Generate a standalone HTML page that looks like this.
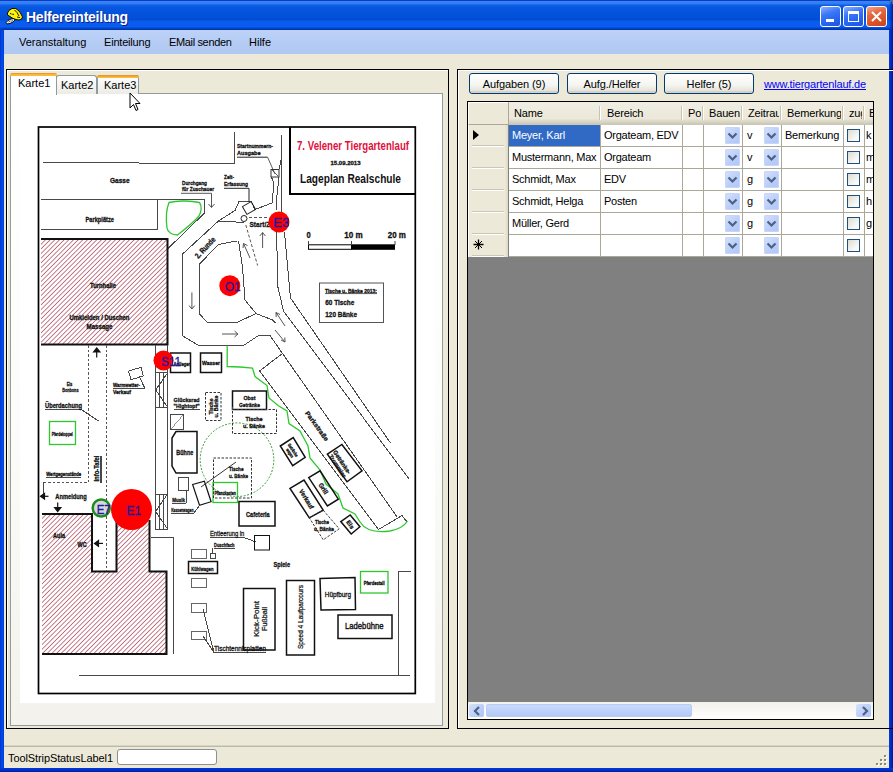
<!DOCTYPE html>
<html><head><meta charset="utf-8">
<style>
*{margin:0;padding:0;box-sizing:border-box}
html,body{width:893px;height:772px;overflow:hidden;background:#fff;font-family:"Liberation Sans",sans-serif;font-size:11px;color:#000}
.a{position:absolute;white-space:nowrap}
#win{position:absolute;left:0;top:0;width:893px;height:772px;background:#0841D6;overflow:hidden}
.tb{top:6px;width:21px;height:21px;border:1px solid #fff;border-radius:3px}
.mi{top:36px;font-size:11px;line-height:12px;color:#000}
.frame{border:1px solid #000}
.ht{top:107px;line-height:12px;overflow:hidden;letter-spacing:-0.15px}
.ct{line-height:12px;letter-spacing:-0.25px}
.cb{width:15px;height:17px;border-radius:2px;background:linear-gradient(135deg,#D6E2FC,#B9CDF8 60%,#AFC6F6);box-shadow:inset 0 0 0 1px #C6D6FA}
.chk{width:13px;height:13px;border:1px solid #1C5180;background:linear-gradient(135deg,#DCDBD5,#F4F4F0 60%,#FFF)}
.btn{top:73px;height:21px;width:90px;border:1px solid #003C74;border-radius:3px;background:linear-gradient(#FFFFFF,#F4F4F0 60%,#E3E2DA 90%,#D6D0C5);text-align:center;line-height:20px;letter-spacing:-0.1px}
.btn::after{content:"";position:absolute;left:1px;right:1px;bottom:0;height:2px;background:#D6D0C5;border-radius:0 0 2px 2px}
</style></head><body>
<div id="win">
<div class="a" style="left:0;top:0;width:893px;height:30px;background:linear-gradient(#0A3CC8 0px,#0A3CC8 1px,#3A86F4 1px,#2F7BF2 4px,#0F5EE8 5px,#0556E0 8px,#0450D8 17px,#044CD2 20px,#0A5CEE 21px,#0A5CEE 27px,#0046D0 28px,#0030A8 30px)"></div>
<div class="a" style="left:0;top:30px;width:4px;height:742px;background:linear-gradient(90deg,#0030C8,#0050F0 2px,#0038D8)"></div>
<div class="a" style="left:889px;top:30px;width:4px;height:742px;background:linear-gradient(90deg,#0040E0,#0028C0 2px,#001A9A)"></div>
<div class="a" style="left:889px;top:0;width:4px;height:30px;background:linear-gradient(90deg,rgba(0,56,208,0),rgba(0,40,180,.6) 2px,rgba(0,24,140,.9))"></div>
<div class="a" style="left:0;top:768px;width:893px;height:4px;background:linear-gradient(#0038D8,#0030C8 2px,#001AA0)"></div>
<div class="a" style="left:890px;top:0;width:3px;height:2px;background:#3A6EA5"></div>
<div class="a" style="left:892px;top:2px;width:1px;height:2px;background:#3A6EA5"></div>
<div class="a" style="left:26px;top:9px;font-weight:bold;font-size:14px;line-height:16px;letter-spacing:-0.25px;color:#fff;text-shadow:1px 1px 0 #0A2288">Helfereinteilung</div>
<!-- icon -->
<svg class="a" style="left:5px;top:6px" width="20" height="20" viewBox="0 0 20 20">
<path d="M2.5 7 L4 4.5 L7 2.5 L10.5 2.5 L13 4 L15 6.5 L16.5 9 L17.5 11 L16.5 13 L14 14 L11 13.5 L8 12.5 L5 10.5 L2.5 9 Z" fill="#FFF200" stroke="#000" stroke-width="0.9"/>
<path d="M5 7.5 L9 8.5 M9.5 4 L12 6.5 L14 10 M12 11 L15 11.5" stroke="#000" stroke-width="0.9" fill="none"/>
<path d="M6 8 L8.5 7.5" stroke="#C8C8C8" stroke-width="1"/>
<path d="M1 16.5 L3 14.5 L6 13 L9 12.5 L10 14 L8 16 L5 17.5 L2 18 Z" fill="#E8E8E8" stroke="#000" stroke-width="0.9"/>
<path d="M3.5 16 L5.5 15 M6 15.5 L8 14" stroke="#555" stroke-width="0.8"/>
</svg>
<!-- title buttons -->
<div class="a tb" style="left:820px;background:linear-gradient(160deg,#8DB0FF 0%,#3C78F8 35%,#2563F2 70%,#1F54D8)"><div class="a" style="left:5px;top:12px;width:8px;height:3px;background:#fff"></div></div>
<div class="a tb" style="left:843px;background:linear-gradient(160deg,#8DB0FF 0%,#3C78F8 35%,#2563F2 70%,#1F54D8)"><div class="a" style="left:4px;top:4px;width:11px;height:11px;border:1px solid #fff;border-top:3px solid #fff"></div></div>
<div class="a tb" style="left:866px;background:linear-gradient(160deg,#F4A58C 0%,#E4683F 35%,#DA5228 70%,#C6421E)"><svg class="a" style="left:3px;top:3px" width="13" height="13"><path d="M2 2 L11 11 M11 2 L2 11" stroke="#fff" stroke-width="2"/></svg></div>
<!-- client -->
<div class="a" style="left:4px;top:30px;width:885px;height:738px;background:#ECE9D8"></div>
<div class="a" style="left:4px;top:30px;width:885px;height:24px;background:linear-gradient(#BCD2F7,#B5CCF4 50%,#B0C8F2)"></div>
<div class="a mi" style="left:19px">Veranstaltung</div>
<div class="a mi" style="left:104px;letter-spacing:-0.2px">Einteilung</div>
<div class="a mi" style="left:169px;letter-spacing:-0.35px">EMail senden</div>
<div class="a mi" style="left:249px">Hilfe</div>
<!-- left panel -->
<div class="a frame" style="left:6px;top:69px;width:443px;height:660px;box-shadow:inset 1px 1px 0 #fff"></div>
<div class="a" style="left:10px;top:93px;width:433px;height:633px;border:1px solid #919B9C;background:linear-gradient(#FFFFFF 0%,#FBFBF9 55%,#F3F2EC)"></div>
<!-- tabs -->
<div class="a" style="left:56px;top:75px;width:41px;height:19px;border:1px solid #919B9C;border-bottom:none;border-radius:3px 3px 0 0;background:linear-gradient(#FFFFFF,#F3F3EF 60%,#ECEBE5)"></div>
<div class="a" style="left:61px;top:79px;line-height:12px">Karte2</div>
<div class="a" style="left:97px;top:75px;width:42px;height:19px;border:1px solid #919B9C;border-bottom:none;border-radius:3px 3px 0 0;background:linear-gradient(#FFFFFF,#F3F3EF 60%,#ECEBE5)"></div>
<div class="a" style="left:97px;top:75px;width:42px;height:3px;background:linear-gradient(#E68B2C,#FFC73C);border-radius:3px 3px 0 0"></div>
<div class="a" style="left:104px;top:79px;line-height:12px">Karte3</div>
<div class="a" style="left:10px;top:73px;width:47px;height:22px;border:1px solid #919B9C;border-bottom:none;border-radius:3px 3px 0 0;background:#FFFFFF"></div>
<div class="a" style="left:10px;top:73px;width:47px;height:3px;background:linear-gradient(#E68B2C,#FFC73C 2px,#F8B030);border-radius:3px 3px 0 0"></div>
<div class="a" style="left:18px;top:77px;line-height:12px">Karte1</div>
<!-- right panel -->
<div class="a frame" style="left:457px;top:69px;width:440px;height:660px;box-shadow:inset 1px 1px 0 #fff"></div>
<div class="a btn" style="left:469px">Aufgaben (9)</div>
<div class="a btn" style="left:567px">Aufg./Helfer</div>
<div class="a btn" style="left:664px">Helfer (5)</div>
<div class="a" style="left:764px;top:78px;line-height:12px;color:#0000FF;text-decoration:underline;letter-spacing:-0.18px">www.tiergartenlauf.de</div>
<!-- grid -->
<div class="a" style="left:467px;top:101px;width:407px;height:619px;background:#808080;border:1px solid #000"></div>
<div class="a" style="left:468px;top:702px;width:405px;height:17px;background:linear-gradient(#F3F1EC,#FEFEFB)"></div>
<div class="a" style="left:469px;top:704px;width:15px;height:13px;border-radius:2px;background:linear-gradient(135deg,#D6E2FC,#B9CDF8 60%,#AFC6F6)"><svg class="a" style="left:3px;top:1px" width="10" height="12"><path d="M7 2 L3 6 L7 10" stroke="#4D6185" stroke-width="2.2" fill="none"/></svg></div>
<div class="a" style="left:486px;top:704px;width:206px;height:13px;border-radius:2px;border:1px solid #B8CCF4;background:linear-gradient(#C9DAFC,#BCD0FA 60%,#B2C8F6)"></div>
<div class="a" style="left:856px;top:704px;width:15px;height:13px;border-radius:2px;background:linear-gradient(135deg,#D6E2FC,#B9CDF8 60%,#AFC6F6)"><svg class="a" style="left:4px;top:1px" width="10" height="12"><path d="M3 2 L7 6 L3 10" stroke="#4D6185" stroke-width="2.2" fill="none"/></svg></div>
<!-- status -->
<div class="a" style="left:4px;top:745px;width:885px;height:1px;background:#D8D4C4"></div>
<div class="a" style="left:4px;top:746px;width:885px;height:1px;background:#BDB9AA"></div>
<div class="a" style="left:8px;top:752px;line-height:12px;letter-spacing:-0.1px">ToolStripStatusLabel1</div>
<div class="a" style="left:117px;top:749px;width:100px;height:16px;border:1px solid #8E8F8F;border-radius:3px;background:#fff"></div>
<svg class="a" style="left:876px;top:755px" width="12" height="12"><g fill="#fff"><rect x="9" y="1" width="2" height="2"/><rect x="5" y="5" width="2" height="2"/><rect x="9" y="5" width="2" height="2"/><rect x="1" y="9" width="2" height="2"/><rect x="5" y="9" width="2" height="2"/><rect x="9" y="9" width="2" height="2"/></g><g fill="#8A8878"><rect x="8" y="0" width="2" height="2"/><rect x="4" y="4" width="2" height="2"/><rect x="8" y="4" width="2" height="2"/><rect x="0" y="8" width="2" height="2"/><rect x="4" y="8" width="2" height="2"/><rect x="8" y="8" width="2" height="2"/></g></svg>
<div class="a" style="left:468px;top:102px;width:405px;height:23px;background:linear-gradient(#F0EEE3 0,#EBE8D9 17px,#E2DECD 18px,#D9D5C4 20px,#CBC7B8 22px)"></div>
<div class="a" style="left:468px;top:102px;width:40px;height:23px;background:#ECE9D8;border-top:1px solid #fff;border-left:1px solid #fff;border-bottom:1px solid #ACA899"></div>
<div class="a ht" style="left:514px;width:84px">Name</div>
<div class="a ht" style="left:607px;width:73px">Bereich</div>
<div class="a ht" style="left:688px;width:13px">Po</div>
<div class="a ht" style="left:709px;width:31px">Bauen</div>
<div class="a ht" style="left:748px;width:31px">Zeitraum</div>
<div class="a ht" style="left:787px;width:54px">Bemerkung</div>
<div class="a ht" style="left:849px;width:13px">zugeteilt</div>
<div class="a ht" style="left:869px;width:4px">Bemerkung2</div>
<div class="a" style="left:599px;top:106px;width:1px;height:14px;background:#C7C5B2"></div><div class="a" style="left:600px;top:106px;width:1px;height:14px;background:#fff"></div>
<div class="a" style="left:681px;top:106px;width:1px;height:14px;background:#C7C5B2"></div><div class="a" style="left:682px;top:106px;width:1px;height:14px;background:#fff"></div>
<div class="a" style="left:702px;top:106px;width:1px;height:14px;background:#C7C5B2"></div><div class="a" style="left:703px;top:106px;width:1px;height:14px;background:#fff"></div>
<div class="a" style="left:741px;top:106px;width:1px;height:14px;background:#C7C5B2"></div><div class="a" style="left:742px;top:106px;width:1px;height:14px;background:#fff"></div>
<div class="a" style="left:780px;top:106px;width:1px;height:14px;background:#C7C5B2"></div><div class="a" style="left:781px;top:106px;width:1px;height:14px;background:#fff"></div>
<div class="a" style="left:842px;top:106px;width:1px;height:14px;background:#C7C5B2"></div><div class="a" style="left:843px;top:106px;width:1px;height:14px;background:#fff"></div>
<div class="a" style="left:863px;top:106px;width:1px;height:14px;background:#C7C5B2"></div><div class="a" style="left:864px;top:106px;width:1px;height:14px;background:#fff"></div>
<div class="a" style="left:509px;top:125px;width:364px;height:132px;background:#fff"></div>
<div class="a" style="left:468px;top:125px;width:40px;height:132px;background:#ECE9D8;border-right:1px solid #ACA899"></div>
<div class="a" style="left:509px;top:146px;width:364px;height:1px;background:#ACA899"></div>
<div class="a" style="left:472px;top:145px;width:32px;height:1px;background:#CBC7B8"></div><div class="a" style="left:472px;top:146px;width:32px;height:1px;background:#fff"></div>
<div class="a" style="left:509px;top:125px;width:91px;height:21px;background:#316AC5"></div>
<div class="a ct" style="left:512px;top:129px;color:#fff">Meyer, Karl</div>
<div class="a ct" style="left:604px;top:129px">Orgateam, EDV</div>
<div class="a ct" style="left:747px;top:129px">v</div>
<div class="a ct" style="left:785px;top:129px">Bemerkung</div>
<div class="a ct" style="left:866px;top:129px;width:7px;overflow:hidden">k</div>
<div class="a cb" style="left:725px;top:127px"><svg width="15" height="17" style="position:absolute;left:0;top:0"><path d="M3.5 6.5 L7.5 10.5 L11.5 6.5" stroke="#4D6185" stroke-width="2.2" fill="none"/></svg></div>
<div class="a cb" style="left:764px;top:127px"><svg width="15" height="17" style="position:absolute;left:0;top:0"><path d="M3.5 6.5 L7.5 10.5 L11.5 6.5" stroke="#4D6185" stroke-width="2.2" fill="none"/></svg></div>
<div class="a chk" style="left:847px;top:129px"></div>
<div class="a" style="left:509px;top:168px;width:364px;height:1px;background:#ACA899"></div>
<div class="a" style="left:472px;top:167px;width:32px;height:1px;background:#CBC7B8"></div><div class="a" style="left:472px;top:168px;width:32px;height:1px;background:#fff"></div>
<div class="a ct" style="left:512px;top:151px">Mustermann, Max</div>
<div class="a ct" style="left:604px;top:151px">Orgateam</div>
<div class="a ct" style="left:747px;top:151px">v</div>
<div class="a ct" style="left:785px;top:151px"></div>
<div class="a ct" style="left:866px;top:151px;width:7px;overflow:hidden">m</div>
<div class="a cb" style="left:725px;top:149px"><svg width="15" height="17" style="position:absolute;left:0;top:0"><path d="M3.5 6.5 L7.5 10.5 L11.5 6.5" stroke="#4D6185" stroke-width="2.2" fill="none"/></svg></div>
<div class="a cb" style="left:764px;top:149px"><svg width="15" height="17" style="position:absolute;left:0;top:0"><path d="M3.5 6.5 L7.5 10.5 L11.5 6.5" stroke="#4D6185" stroke-width="2.2" fill="none"/></svg></div>
<div class="a chk" style="left:847px;top:151px"></div>
<div class="a" style="left:509px;top:190px;width:364px;height:1px;background:#ACA899"></div>
<div class="a" style="left:472px;top:189px;width:32px;height:1px;background:#CBC7B8"></div><div class="a" style="left:472px;top:190px;width:32px;height:1px;background:#fff"></div>
<div class="a ct" style="left:512px;top:173px">Schmidt, Max</div>
<div class="a ct" style="left:604px;top:173px">EDV</div>
<div class="a ct" style="left:747px;top:173px">g</div>
<div class="a ct" style="left:785px;top:173px"></div>
<div class="a ct" style="left:866px;top:173px;width:7px;overflow:hidden">m</div>
<div class="a cb" style="left:725px;top:171px"><svg width="15" height="17" style="position:absolute;left:0;top:0"><path d="M3.5 6.5 L7.5 10.5 L11.5 6.5" stroke="#4D6185" stroke-width="2.2" fill="none"/></svg></div>
<div class="a cb" style="left:764px;top:171px"><svg width="15" height="17" style="position:absolute;left:0;top:0"><path d="M3.5 6.5 L7.5 10.5 L11.5 6.5" stroke="#4D6185" stroke-width="2.2" fill="none"/></svg></div>
<div class="a chk" style="left:847px;top:173px"></div>
<div class="a" style="left:509px;top:212px;width:364px;height:1px;background:#ACA899"></div>
<div class="a" style="left:472px;top:211px;width:32px;height:1px;background:#CBC7B8"></div><div class="a" style="left:472px;top:212px;width:32px;height:1px;background:#fff"></div>
<div class="a ct" style="left:512px;top:195px">Schmidt, Helga</div>
<div class="a ct" style="left:604px;top:195px">Posten</div>
<div class="a ct" style="left:747px;top:195px">g</div>
<div class="a ct" style="left:785px;top:195px"></div>
<div class="a ct" style="left:866px;top:195px;width:7px;overflow:hidden">h</div>
<div class="a cb" style="left:725px;top:193px"><svg width="15" height="17" style="position:absolute;left:0;top:0"><path d="M3.5 6.5 L7.5 10.5 L11.5 6.5" stroke="#4D6185" stroke-width="2.2" fill="none"/></svg></div>
<div class="a cb" style="left:764px;top:193px"><svg width="15" height="17" style="position:absolute;left:0;top:0"><path d="M3.5 6.5 L7.5 10.5 L11.5 6.5" stroke="#4D6185" stroke-width="2.2" fill="none"/></svg></div>
<div class="a chk" style="left:847px;top:195px"></div>
<div class="a" style="left:509px;top:234px;width:364px;height:1px;background:#ACA899"></div>
<div class="a" style="left:472px;top:233px;width:32px;height:1px;background:#CBC7B8"></div><div class="a" style="left:472px;top:234px;width:32px;height:1px;background:#fff"></div>
<div class="a ct" style="left:512px;top:217px">Müller, Gerd</div>
<div class="a ct" style="left:604px;top:217px"></div>
<div class="a ct" style="left:747px;top:217px">g</div>
<div class="a ct" style="left:785px;top:217px"></div>
<div class="a ct" style="left:866px;top:217px;width:7px;overflow:hidden">g</div>
<div class="a cb" style="left:725px;top:215px"><svg width="15" height="17" style="position:absolute;left:0;top:0"><path d="M3.5 6.5 L7.5 10.5 L11.5 6.5" stroke="#4D6185" stroke-width="2.2" fill="none"/></svg></div>
<div class="a cb" style="left:764px;top:215px"><svg width="15" height="17" style="position:absolute;left:0;top:0"><path d="M3.5 6.5 L7.5 10.5 L11.5 6.5" stroke="#4D6185" stroke-width="2.2" fill="none"/></svg></div>
<div class="a chk" style="left:847px;top:217px"></div>
<div class="a" style="left:509px;top:256px;width:364px;height:1px;background:#ACA899"></div>
<div class="a" style="left:472px;top:255px;width:32px;height:1px;background:#CBC7B8"></div><div class="a" style="left:472px;top:256px;width:32px;height:1px;background:#fff"></div>
<div class="a ct" style="left:512px;top:239px"></div>
<div class="a ct" style="left:604px;top:239px"></div>
<div class="a ct" style="left:747px;top:239px"></div>
<div class="a ct" style="left:785px;top:239px"></div>
<div class="a ct" style="left:866px;top:239px;width:7px;overflow:hidden"></div>
<div class="a cb" style="left:725px;top:237px"><svg width="15" height="17" style="position:absolute;left:0;top:0"><path d="M3.5 6.5 L7.5 10.5 L11.5 6.5" stroke="#4D6185" stroke-width="2.2" fill="none"/></svg></div>
<div class="a cb" style="left:764px;top:237px"><svg width="15" height="17" style="position:absolute;left:0;top:0"><path d="M3.5 6.5 L7.5 10.5 L11.5 6.5" stroke="#4D6185" stroke-width="2.2" fill="none"/></svg></div>
<div class="a chk" style="left:847px;top:239px"></div>
<div class="a" style="left:600px;top:125px;width:1px;height:132px;background:#ACA899"></div>
<div class="a" style="left:682px;top:125px;width:1px;height:132px;background:#ACA899"></div>
<div class="a" style="left:703px;top:125px;width:1px;height:132px;background:#ACA899"></div>
<div class="a" style="left:742px;top:125px;width:1px;height:132px;background:#ACA899"></div>
<div class="a" style="left:781px;top:125px;width:1px;height:132px;background:#ACA899"></div>
<div class="a" style="left:843px;top:125px;width:1px;height:132px;background:#ACA899"></div>
<div class="a" style="left:864px;top:125px;width:1px;height:132px;background:#ACA899"></div>
<div class="a" style="left:468px;top:125px;width:1px;height:132px;background:#fff"></div>
<div class="a" style="left:505px;top:125px;width:3px;height:132px;background:linear-gradient(90deg,#ECE9D8,#DCD8C6)"></div>
<div class="a" style="left:508px;top:102px;width:1px;height:23px;background:#ACA899"></div>
<div class="a" style="left:473px;top:130px;width:0;height:0;border-left:6px solid #000;border-top:5px solid transparent;border-bottom:5px solid transparent"></div>
<svg class="a" style="left:472px;top:238px" width="13" height="13"><g stroke="#000" stroke-width="1.3"><path d="M6.5 1.5 V11.5 M1.5 6.5 H11.5"/><path d="M3 3 L10 10 M10 3 L3 10" stroke-width="1"/></g><circle cx="6.5" cy="6.5" r="1.8" fill="#000"/></svg>
<div class="a" style="left:20px;top:95px;width:415px;height:608px;background:#fff;overflow:hidden"><svg width="415" height="608" viewBox="20 95 415 608" style="position:absolute;left:0;top:0" font-family="Liberation Sans" font-weight="bold">
<defs>
<pattern id="h" patternUnits="userSpaceOnUse" width="3.3" height="3.3" patternTransform="rotate(45)">
<rect width="3.3" height="3.3" fill="#fff"/><rect x="0" y="0" width="0.85" height="3.3" fill="#BA6676"/>
</pattern>
</defs>
<g fill="none" stroke="#484848" stroke-width="1" shape-rendering="crispEdges">
<!-- streets top -->
<path d="M43 162.5 L234 163.5 V132"/>
<path d="M41 199 H204 V213.5 L167.5 249"/>
<path d="M157.5 199 V229.5 H41"/>
<!-- entrance -->
<path d="M281.5 135 V212"/>
<path d="M280.5 160 L279.5 169.5"/>
<path d="M271.5 177 L274 184 L272 203 L255 209.5 L251 201 L239 201.5 L235 210.5 L218.5 221 L182 254.5 V335.5 L198.5 345.5 H243.5 L258.5 335.5 H270 L282.5 353.5 L259.5 371 L378.5 529.5 L402 515.5 L407.5 522.5"/>
<path d="M279 177 L277 195 L276.5 210"/>
<path d="M218.5 221 L244 222.5"/>
<path d="M236.5 241 L218.5 244.5 L199.5 264 V314 L207 322 H238 L256 313.5 L245 300 L242.5 267 L238.5 241"/>
<path d="M256 313.5 L272.5 320 L275.5 323"/>
<path d="M276.5 232 L278 287.5 L283.5 311 L409.5 479.5"/>
<path d="M284.5 232 L290.5 298 L390.5 443"/>
<path d="M397.5 517.5 L282.5 353.5"/>
</g>
<!-- frame -->
<rect x="38.5" y="127" width="376.8" height="566.5" fill="none" stroke="#000" stroke-width="1.7"/>
<path d="M290 127 V194 H415" fill="none" stroke="#000" stroke-width="2"/>
<!-- Turnhalle -->
<rect x="41" y="239" width="126.5" height="105.5" fill="url(#h)"/><path d="M41 239 H167.5 V344.5 H41" fill="none" stroke="#111" stroke-width="2"/>
<!-- Aula -->
<path d="M42 514 H92 V571.5 H116.5 V520 H149.5 V571.5 H166.5 V654 H42 Z" fill="url(#h)"/><path d="M42 514 H92 V571.5 H116.5 V520 M149.5 520 V571.5 H166.5 V654 H42" fill="none" stroke="#111" stroke-width="2"/>

<!-- lower left lines -->
<g fill="none" stroke="#484848" stroke-width="1" shape-rendering="crispEdges">
<path d="M88.5 345 V482" stroke-dasharray="2.5 2" stroke="#555"/>
<path d="M106.5 345 V571" stroke-dasharray="2.5 2" stroke="#555"/>
<path d="M43.5 482 H88.5" stroke-dasharray="2.5 2" stroke="#555"/>
<path d="M155.7 345 V529 H167.5 V345"/>
<path d="M155.7 372.5 H167.5 M155.7 407 H167.5 M159.5 372.5 V407 M163 372.5 V407 M167.5 373 L155.7 390 L167.5 407"/>
<path d="M155.7 494 H167.5 M159.5 494 V529 M163 494 V529 M167.5 494 L155.7 511.5 L167.5 529"/>
<path d="M150.5 537.5 H173.5 V654"/>
<path d="M82 410 L98.5 421 M45 409.8 H82 M46 477 H81"/><path d="M100.8 456 V483" stroke-width="2"/>
<path d="M43.5 482 L44 496"/>
<path d="M244 537.5 L256 542 M209.5 537.5 H244 M213.5 548.5 H235 M213 548.5 L212.8 553 M214 652.5 H266"/>
</g>
<!-- filled arrows -->
<g fill="#111" stroke="#111" stroke-width="1.2">
<path d="M96.7 351 V357.5" /><path d="M93.5 352 L96.7 348 L99.9 352 Z"/>
<path d="M57.7 502.5 V508" /><path d="M54.5 507.5 L57.7 511.5 L60.9 507.5 Z"/>
<path d="M43 496.3 H48.5" /><path d="M44.5 493.5 L40.5 496.3 L44.5 499 Z"/>
<path d="M98 543.4 H103" /><path d="M98.5 540.5 L94.5 543.4 L98.5 546.3 Z"/>
</g>
<!-- open arrows -->
<g fill="none" stroke="#555" stroke-width="1">
<path d="M211.5 193.3 V207.5 M208.5 204 L211.5 207.5 L214.5 204"/>
<path d="M181 193.3 H211.5"/>
<path d="M262.6 248 V232.5 M259.8 236 L262.6 232.5 L265.4 236"/>
<path d="M250 258 L243.5 243.5 M243 248 L243.5 243.5 L247.5 245.5"/>
<path d="M191.9 292.5 V309 M189 305.5 L191.9 309 L194.8 305.5"/>
<path d="M222 334 H238 M234.5 331 L238 334 L234.5 337"/>
<path d="M285 326 L276 312.5 M276.2 317 L276 312.5 L280 314.5"/>
<path d="M275 330 L285 342 M284.8 337.5 L285 342 L281 340"/>
<path d="M245.8 225 L257.6 265.5" stroke-dasharray="3 2"/>
<path d="M249 217.5 H269" stroke-dasharray="3 2"/>
</g>
<circle cx="244" cy="218.5" r="3" fill="none" stroke="#222" stroke-width="1"/>
<rect x="244" y="203.5" width="10" height="9" transform="rotate(-30 249 208)" fill="none" stroke="#222" stroke-width="1"/>
<path d="M249 188.3 V202 M224 188.3 H249 M237 157.2 H267.6" stroke="#222" fill="none"/>
<rect x="271" y="169.5" width="8" height="7.5" fill="none" stroke="#333" stroke-width="1"/>
<path d="M272 170 L278 176 M267.6 157.2 L275 174" stroke="#333" fill="none" stroke-width="0.8"/>
<!-- green -->
<g fill="none" stroke="#2EC82E" stroke-width="1.3">
<path d="M169 202.5 C178 200 192 201 199.5 202.5 C202 206 201.5 212 199 216 C193 223 184 230 177.5 235 C172 235 167.5 232 167 228 C166 220 166 210 169 202.5 Z"/>
<path d="M227.2 345.5 V366.5 L240 367 L252.5 368 L255 376.5 L267 385.5 L269 398 L278 405.5 L287 411 L289 423.5 L300 431 L308 446 L310 458 L320 470 L326 484 L338 494 L343 508 L355 514 L360 522 C365 530 375 533 390 531 C400 529 405 525 407.5 521"/>
<rect x="49.5" y="421.5" width="26" height="23"/>
<rect x="213" y="482.5" width="24.5" height="20"/>
<rect x="360.5" y="571.5" width="27.5" height="21.5"/>
</g>
<circle cx="237" cy="459.7" r="36.8" fill="none" stroke="#3A9A3A" stroke-width="1" stroke-dasharray="2 1.5"/>
<!-- boxes solid -->
<g fill="none" stroke="#111" stroke-width="1.5">
<rect x="170.5" y="353" width="20" height="19.5"/>
<rect x="200.5" y="353" width="21" height="19.5"/>
<rect x="232.5" y="391" width="34" height="18.5"/>
<path d="M176 431.5 H197 V473 H176 L172 466 V438 Z"/>
<rect x="239" y="501.5" width="36" height="24.5"/>
<rect x="254.5" y="535.5" width="15" height="14.5" stroke-width="1"/>
<rect x="188.5" y="561.5" width="29" height="12"/>
<rect x="243.5" y="588.5" width="31.5" height="61.5"/>
<rect x="286.5" y="580.5" width="28" height="74.5"/>
<path d="M320 578.5 L355 577.5 L355.5 609.5 L321 610 Z"/>
<rect x="338" y="615" width="54" height="23.5"/>
<path d="M280.3 446 L293.2 437.6 L305.2 457.3 L292.7 465.6 Z"/>
<path d="M327.4 454.2 L341.9 444.5 L362 470.8 L347 481.8 Z"/>
<path d="M308.7 477.6 L320.1 470.8 L338.3 499.2 L327.4 506 Z"/>
<path d="M290 488.4 L304 480.1 L323.2 510.2 L309.3 517.8 Z"/>
<path d="M340.8 521.6 L350.2 514.9 L359.9 526.7 L351.2 534 Z"/>
<path d="M192.6 484.5 L204.4 481.2 L211.1 501.7 L199.5 505.3 Z" stroke-width="1.2"/>
</g>
<g fill="none" stroke="#484848" stroke-width="1" shape-rendering="crispEdges">
<rect x="170.5" y="414.5" width="13" height="15"/>
<path d="M171 429 L183 415" stroke-width="0.6"/>
<rect x="178.5" y="477" width="10" height="13.5"/>
<rect x="191" y="549.5" width="15" height="8.5" stroke="#666"/>
<rect x="210.5" y="553" width="5" height="5"/>
<rect x="191" y="578" width="15" height="9.5" stroke="#666"/>
<rect x="191" y="603.5" width="15" height="9" stroke="#666"/>
<rect x="191" y="631" width="15" height="8.5" stroke="#666"/>
<path d="M203 609 L214 652.5 M203 636 L214 652.5"/>
<path d="M78.5 675.5 H409.5 M398.5 675.5 V571 H411" />
<rect x="129.5" y="369" width="13" height="9" transform="rotate(-15 136 373.5)"/>
<path d="M139 376 L144.7 388 H113"/>
<path d="M173.6 409.8 H200"/>
<path d="M232.5 407 V409.5"/>
<path d="M186 490.5 V503" />
<path d="M199.5 505.3 L194 513 H171 M172 503 H186"/>
<path d="M213 500 L172 500" stroke="none"/>
</g>
<g fill="none" stroke="#333" stroke-width="1" stroke-dasharray="2.5 1.5">
<rect x="205.5" y="392.5" width="15.5" height="28"/>
<rect x="232.5" y="409.5" width="44" height="24"/>
<rect x="213.5" y="458" width="38" height="40"/>
<path d="M309.3 517.8 L323.2 510.2 L339.2 528.8 L323.2 539.8 Z"/>
<path d="M201 487 L236 462" stroke-dasharray="none"/>
</g>
<!-- scale bar -->
<rect x="308.5" y="244.8" width="43" height="4.5" fill="#fff" stroke="#000" stroke-width="1"/>
<rect x="351.5" y="244.3" width="43.5" height="5.5" fill="#000"/>
<path d="M308.5 241 V245 M351.5 241 V245 M395 241 V245" stroke="#444" stroke-width="1"/>
<rect x="319.5" y="283" width="64" height="39.5" fill="none" stroke="#555" stroke-width="1"/>
<path d="M325 293.6 H377" stroke="#333" stroke-width="0.8"/>
<!--TEXT-->
<g fill="#111" stroke="#111" stroke-width="0.3"><text x="297" y="150" font-size="13.5" textLength="112" lengthAdjust="spacingAndGlyphs" fill="#E0103C" stroke="none">7. Velener Tiergartenlauf</text>
<text x="330.5" y="165" font-size="6" textLength="30" lengthAdjust="spacingAndGlyphs" >15.09.2013</text>
<text x="300" y="183" font-size="13.5" textLength="101" lengthAdjust="spacingAndGlyphs" stroke="none">Lageplan Realschule</text>
<text x="110" y="182.5" font-size="7" textLength="19.5" lengthAdjust="spacingAndGlyphs" >Gasse</text>
<text x="85.5" y="222" font-size="7" textLength="28.5" lengthAdjust="spacingAndGlyphs" >Parkplätze</text>
<text x="182" y="184.5" font-size="6" textLength="25" lengthAdjust="spacingAndGlyphs" >Durchgang</text>
<text x="182" y="190.5" font-size="6" textLength="32" lengthAdjust="spacingAndGlyphs" >für Zuschauer</text>
<text x="237" y="147.5" font-size="6" textLength="36" lengthAdjust="spacingAndGlyphs" >Startnummern-</text>
<text x="237" y="155.3" font-size="6" textLength="23.5" lengthAdjust="spacingAndGlyphs" >Ausgabe</text>
<text x="224" y="179" font-size="6" textLength="10" lengthAdjust="spacingAndGlyphs" >Zeit-</text>
<text x="224" y="186" font-size="6" textLength="24" lengthAdjust="spacingAndGlyphs" >Erfassung</text>
<text x="249.5" y="226.8" font-size="8" textLength="28" lengthAdjust="spacingAndGlyphs" >Start/Ziel</text>
<text x="306.4" y="238" font-size="8.5" textLength="4.2" lengthAdjust="spacingAndGlyphs" >0</text>
<text x="344.3" y="238" font-size="8.5" textLength="18.5" lengthAdjust="spacingAndGlyphs" >10 m</text>
<text x="387.7" y="238" font-size="8.5" textLength="18.2" lengthAdjust="spacingAndGlyphs" >20 m</text>
<text x="325" y="292.5" font-size="5.5" textLength="52" lengthAdjust="spacingAndGlyphs" >Tische u. Bänke 2013:</text>
<text x="325.3" y="305.4" font-size="7.5" textLength="29" lengthAdjust="spacingAndGlyphs" >60 Tische</text>
<text x="325.3" y="316.6" font-size="7.5" textLength="31.7" lengthAdjust="spacingAndGlyphs" >120 Bänke</text>
<text x="90" y="287.5" font-size="6.5" textLength="26" lengthAdjust="spacingAndGlyphs" >Turnhalle</text>
<text x="69.5" y="320" font-size="6.5" textLength="60" lengthAdjust="spacingAndGlyphs" >Umkleiden / Duschen</text>
<text x="86.5" y="329" font-size="6.5" textLength="26" lengthAdjust="spacingAndGlyphs" >Massage</text>
<text x="66.7" y="386" font-size="5" textLength="5.5" lengthAdjust="spacingAndGlyphs" >Eis</text>
<text x="62.2" y="392" font-size="5.5" textLength="16.3" lengthAdjust="spacingAndGlyphs" >Bonbons</text>
<text x="113" y="386.5" font-size="5.5" textLength="27" lengthAdjust="spacingAndGlyphs" >Warmwetter-</text>
<text x="113" y="394" font-size="5.5" textLength="18" lengthAdjust="spacingAndGlyphs" >Verkauf</text>
<text x="45" y="408" font-size="7" textLength="37" lengthAdjust="spacingAndGlyphs" >Überdachung</text>
<text x="51.7" y="436" font-size="5" textLength="21" lengthAdjust="spacingAndGlyphs" >Pferdekoppel</text>
<text x="46.2" y="475.5" font-size="5" textLength="35" lengthAdjust="spacingAndGlyphs" >Wertgegenstände</text>
<text x="55.3" y="498.5" font-size="7.5" textLength="31.5" lengthAdjust="spacingAndGlyphs" >Anmeldung</text>
<text x="53.1" y="538" font-size="7" textLength="12" lengthAdjust="spacingAndGlyphs" >Aula</text>
<text x="77.6" y="546.5" font-size="7" textLength="9" lengthAdjust="spacingAndGlyphs" >WC</text>
<text x="173.6" y="365.5" font-size="5.5" textLength="16.5" lengthAdjust="spacingAndGlyphs" >Anlieger</text>
<text x="202" y="365" font-size="5.5" textLength="18" lengthAdjust="spacingAndGlyphs" >Wasser</text>
<text x="173.6" y="401.5" font-size="6" textLength="26" lengthAdjust="spacingAndGlyphs" >Glücksrad</text>
<text x="173.6" y="408" font-size="6" textLength="26" lengthAdjust="spacingAndGlyphs" >"Hightopf"</text>
<text x="243.5" y="400" font-size="6" textLength="12" lengthAdjust="spacingAndGlyphs" >Obst</text>
<text x="239" y="406.5" font-size="6" textLength="21" lengthAdjust="spacingAndGlyphs" >Getränke</text>
<text x="245.5" y="421" font-size="6" textLength="17" lengthAdjust="spacingAndGlyphs" >Tische</text>
<text x="243" y="428" font-size="6" textLength="22" lengthAdjust="spacingAndGlyphs" >u. Bänke</text>
<text x="176.3" y="454.5" font-size="7" textLength="17" lengthAdjust="spacingAndGlyphs" >Bühne</text>
<text x="229" y="470.5" font-size="6" textLength="14.5" lengthAdjust="spacingAndGlyphs" >Tische</text>
<text x="229" y="477.5" font-size="6" textLength="19" lengthAdjust="spacingAndGlyphs" >u. Bänke</text>
<text x="214.4" y="495" font-size="5" textLength="21.4" lengthAdjust="spacingAndGlyphs" >Pflanzkasten</text>
<text x="172.3" y="502" font-size="5.5" textLength="12.7" lengthAdjust="spacingAndGlyphs" >Musik</text>
<text x="171.2" y="512" font-size="5.5" textLength="22.3" lengthAdjust="spacingAndGlyphs" >Kassenwagen</text>
<text x="246.1" y="517.1" font-size="7" textLength="23.6" lengthAdjust="spacingAndGlyphs" >Cafeteria</text>
<text x="209.9" y="536" font-size="8" textLength="34.4" lengthAdjust="spacingAndGlyphs" font-weight="normal">Entleerung in</text>
<text x="214" y="547" font-size="5.5" textLength="20.4" lengthAdjust="spacingAndGlyphs" >Duschfach</text>
<text x="191.2" y="570.5" font-size="5.5" textLength="22.3" lengthAdjust="spacingAndGlyphs" >Kühlwagen</text>
<text x="273.5" y="566.5" font-size="7" textLength="16.5" lengthAdjust="spacingAndGlyphs" >Spiele</text>
<text x="324.8" y="597" font-size="7" textLength="26.2" lengthAdjust="spacingAndGlyphs" font-weight="normal">Hüpfburg</text>
<text x="363.8" y="584.5" font-size="5" textLength="20.8" lengthAdjust="spacingAndGlyphs" >Pferdestall</text>
<text x="345" y="629" font-size="9.5" textLength="38.5" lengthAdjust="spacingAndGlyphs" font-weight="normal" stroke-width="0.4">Ladebühne</text>
<text x="214" y="651" font-size="7" textLength="52" lengthAdjust="spacingAndGlyphs" font-weight="normal">Tischtennisplatten</text>
<text x="205" y="250.38" font-size="8" text-anchor="middle" textLength="26" lengthAdjust="spacingAndGlyphs" transform="rotate(-47 205 247.5)" >2. Runde</text>
<text x="96.2" y="470.84" font-size="6.5" text-anchor="middle" textLength="26" lengthAdjust="spacingAndGlyphs" transform="rotate(-90 96.2 468.5)" >Info-Tafel</text>
<text x="211" y="408.48" font-size="5.5" text-anchor="middle" textLength="16" lengthAdjust="spacingAndGlyphs" transform="rotate(-90 211 406.5)" >Tische</text>
<text x="216.5" y="408.48" font-size="5.5" text-anchor="middle" textLength="22" lengthAdjust="spacingAndGlyphs" transform="rotate(-90 216.5 406.5)" >u. Bänke</text>
<text x="256.5" y="621.70" font-size="7.5" text-anchor="middle" textLength="36" lengthAdjust="spacingAndGlyphs" transform="rotate(-90 256.5 619)" font-weight="normal" stroke-width="0.25">Kick-Point</text>
<text x="264" y="621.70" font-size="7.5" text-anchor="middle" textLength="24" lengthAdjust="spacingAndGlyphs" transform="rotate(-90 264 619)" font-weight="normal" stroke-width="0.25">Fußball</text>
<text x="300.5" y="619.88" font-size="8" text-anchor="middle" textLength="64" lengthAdjust="spacingAndGlyphs" transform="rotate(-90 300.5 617)" font-weight="normal" stroke-width="0.25">Speed 4 Laufparcours</text>
<text x="317" y="428.34" font-size="6.5" text-anchor="middle" textLength="35" lengthAdjust="spacingAndGlyphs" transform="rotate(54 317 426)" >Parkstraße</text>
<text x="342" y="464.16" font-size="6" text-anchor="middle" textLength="27" lengthAdjust="spacingAndGlyphs" transform="rotate(56 342 462)" >Getränke-</text>
<text x="337.5" y="468.16" font-size="6" text-anchor="middle" textLength="26" lengthAdjust="spacingAndGlyphs" transform="rotate(56 337.5 466)" >Trommler</text>
<text x="323.5" y="490.84" font-size="6.5" text-anchor="middle" textLength="12" lengthAdjust="spacingAndGlyphs" transform="rotate(58 323.5 488.5)" >Grill</text>
<text x="306.5" y="501.34" font-size="6.5" text-anchor="middle" textLength="22" lengthAdjust="spacingAndGlyphs" transform="rotate(58 306.5 499)" >Verkauf</text>
<text x="322" y="524.48" font-size="5.5" text-anchor="middle" textLength="14" lengthAdjust="spacingAndGlyphs" transform="rotate(0 322 522.5)" >Tische</text>
<text x="324" y="530.98" font-size="5.5" text-anchor="middle" textLength="20" lengthAdjust="spacingAndGlyphs" transform="rotate(0 324 529)" >u. Bänke</text>
<text x="350.4" y="526.66" font-size="6" text-anchor="middle" textLength="9" lengthAdjust="spacingAndGlyphs" transform="rotate(56 350.4 524.5)" >Eis</text>
<text x="293" y="451.62" font-size="4.5" text-anchor="middle" textLength="15" lengthAdjust="spacingAndGlyphs" transform="rotate(56 293 450)" >Getränke</text>
<text x="290" y="454.62" font-size="4.5" text-anchor="middle" textLength="10" lengthAdjust="spacingAndGlyphs" transform="rotate(56 290 453)" >wagen</text></g>
<!--/TEXT-->
<!-- circles -->
<circle cx="279" cy="222" r="10.5" fill="#FF0000"/>
<circle cx="229.8" cy="285.7" r="10.5" fill="#FF0000"/>
<circle cx="163.5" cy="360.5" r="10" fill="#FF0000"/>
<circle cx="101.2" cy="508" r="8.5" fill="#D8D8D8" stroke="#208A20" stroke-width="2.5"/>
<circle cx="131.5" cy="509.5" r="20.5" fill="#FF0000"/>

<!--CTEXT-->
<text x="273.2" y="227" font-size="13" font-weight="normal" fill="#1C1CA0" stroke="#1C1CA0" stroke-width="0.35" textLength="16" lengthAdjust="spacingAndGlyphs">E3</text>
<text x="224.7" y="291" font-size="13" font-weight="normal" fill="#1C1CA0" stroke="#1C1CA0" stroke-width="0.35" textLength="16" lengthAdjust="spacingAndGlyphs">O1</text>
<text x="161" y="365.8" font-size="13" font-weight="normal" fill="#1C1CA0" stroke="#1C1CA0" stroke-width="0.35" textLength="20" lengthAdjust="spacingAndGlyphs">S11</text>
<text x="96.7" y="514" font-size="13" font-weight="normal" fill="#1C1CA0" stroke="#1C1CA0" stroke-width="0.35" textLength="14" lengthAdjust="spacingAndGlyphs">E7</text>
<text x="126.6" y="515" font-size="13" font-weight="normal" fill="#1C1CA0" stroke="#1C1CA0" stroke-width="0.35" textLength="14.5" lengthAdjust="spacingAndGlyphs">E1</text>
<!--/CTEXT-->
</svg>
</div>
<!-- cursor -->
<svg class="a" style="left:129px;top:92px" width="14" height="22" viewBox="0 0 14 22"><path d="M1 1 L1 16 L4.5 12.5 L7 18.5 L9 17.5 L6.5 11.5 L11 11.5 Z" fill="#fff" stroke="#000" stroke-width="1"/></svg>
</div>
</body></html>
